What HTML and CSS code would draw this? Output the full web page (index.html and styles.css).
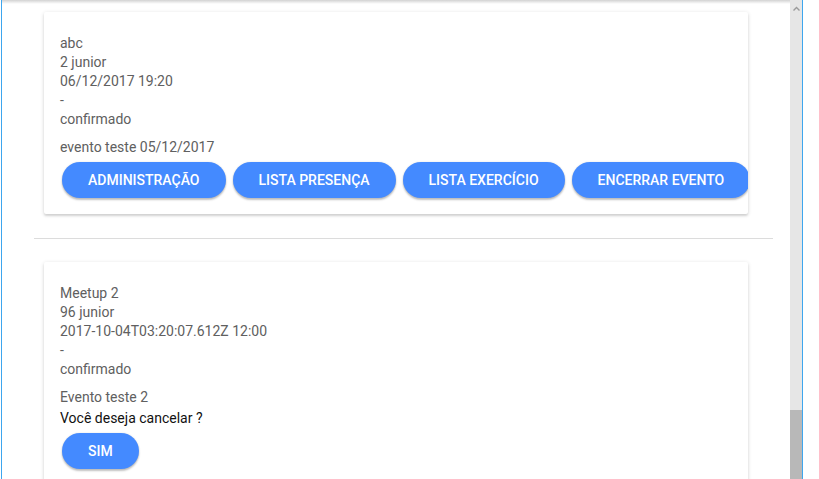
FILE: index.html
```html
<!DOCTYPE html>
<html lang="pt">
<head>
<meta charset="utf-8">
<title>Eventos</title>
<link rel="stylesheet" href="styles.css">
</head>
<body>
<div class="window">
  <main class="content">
    <div class="topshade"></div>
    <section class="card">
      <div class="info">
        <div>abc</div>
        <div>2 junior</div>
        <div>06/12/2017 19:20</div>
        <div>-</div>
        <div>confirmado</div>
      </div>
      <p class="desc">evento teste 05/12/2017</p>
      <div class="actions">
        <button class="btn">Administração</button>
        <button class="btn">Lista presença</button>
        <button class="btn">Lista exercício</button>
        <button class="btn">Encerrar evento</button>
      </div>
    </section>
    <hr class="divider">
    <section class="card">
      <div class="info">
        <div>Meetup 2</div>
        <div>96 junior</div>
        <div>2017-10-04T03:20:07.612Z 12:00</div>
        <div>-</div>
        <div>confirmado</div>
      </div>
      <p class="desc">Evento teste 2</p>
      <p class="question">Você deseja cancelar ?</p>
      <div class="actions">
        <button class="btn">Sim</button>
      </div>
    </section>
  </main>
  <div class="scrollbar">
    <svg class="arrow" width="7" height="5" viewBox="0 0 7 5"><path d="M0.5 4.5 L3.5 1.5 L6.5 4.5" fill="none" stroke="#9a9a9a" stroke-width="1.4"/></svg>
    <div class="thumb"></div>
  </div>
</div>
</body>
</html>
```
FILE: styles.css
```css
html, body {
  margin: 0;
  padding: 0;
  background: #ffffff;
  height: 479px;
  overflow: hidden;
}

body {
  font-family: Roboto, "Liberation Sans", sans-serif;
  font-size: 14px;
}

.window {
  display: flex;
  margin-left: 1px;
  width: 800px;
  height: 479px;
  border-left: 1px solid #3ea6ee;
  border-right: 1px solid #3ea6ee;
}

.content {
  position: relative;
  flex: 1;
  overflow: hidden;
  padding-top: 12px;
}

.topshade {
  position: absolute;
  left: 0;
  right: -12px;
  top: 0;
  height: 4px;
  background: linear-gradient(#d2d2d2, #eeeeee 60%, rgba(255,255,255,0));
  z-index: 2;
}

.card {
  margin-left: 42px;
  width: 704px;
  box-sizing: border-box;
  padding: 22px 16px 16px;
  background: #fff;
  border-radius: 2px;
  box-shadow: 0 1px 4px rgba(0,0,0,0.14), 0 2px 2px rgba(0,0,0,0.10);
  overflow: hidden;
  color: #606060;
  line-height: 19px;
}

.info div {
  white-space: nowrap;
}

.desc {
  margin: 9px 0 0;
}

.question {
  margin: 2px 0 0;
  color: #111;
}

.actions {
  display: flex;
  gap: 7px;
  margin-top: 5px;
  margin-left: 2px;
}

.btn {
  flex-shrink: 0;
  height: 36px;
  padding: 0 26px;
  border: none;
  border-radius: 18px;
  background: #448aff;
  color: #fff;
  font-family: Roboto, "Liberation Sans", sans-serif;
  font-weight: 500;
  font-size: 14px;
  text-transform: uppercase;
  white-space: nowrap;
  box-shadow: 0 2px 2px rgba(0,0,0,0.24), 0 0 2px rgba(0,0,0,0.12);
}

.btn + .btn {
  margin-left: 0;
}

.divider {
  margin: 24px 0 23px 32px;
  width: 739px;
  height: 0;
  border: none;
  border-top: 1px solid #dcdcdc;
}

.scrollbar {
  position: relative;
  width: 12px;
  background: #e6e6e6;
  display: flex;
  flex-direction: column;
  align-items: center;
}

.arrow {
  margin-top: 6px;
}

.thumb {
  position: absolute;
  left: 0;
  right: 0;
  top: 410px;
  bottom: 0;
  background: #b8b8b8;
}
```
